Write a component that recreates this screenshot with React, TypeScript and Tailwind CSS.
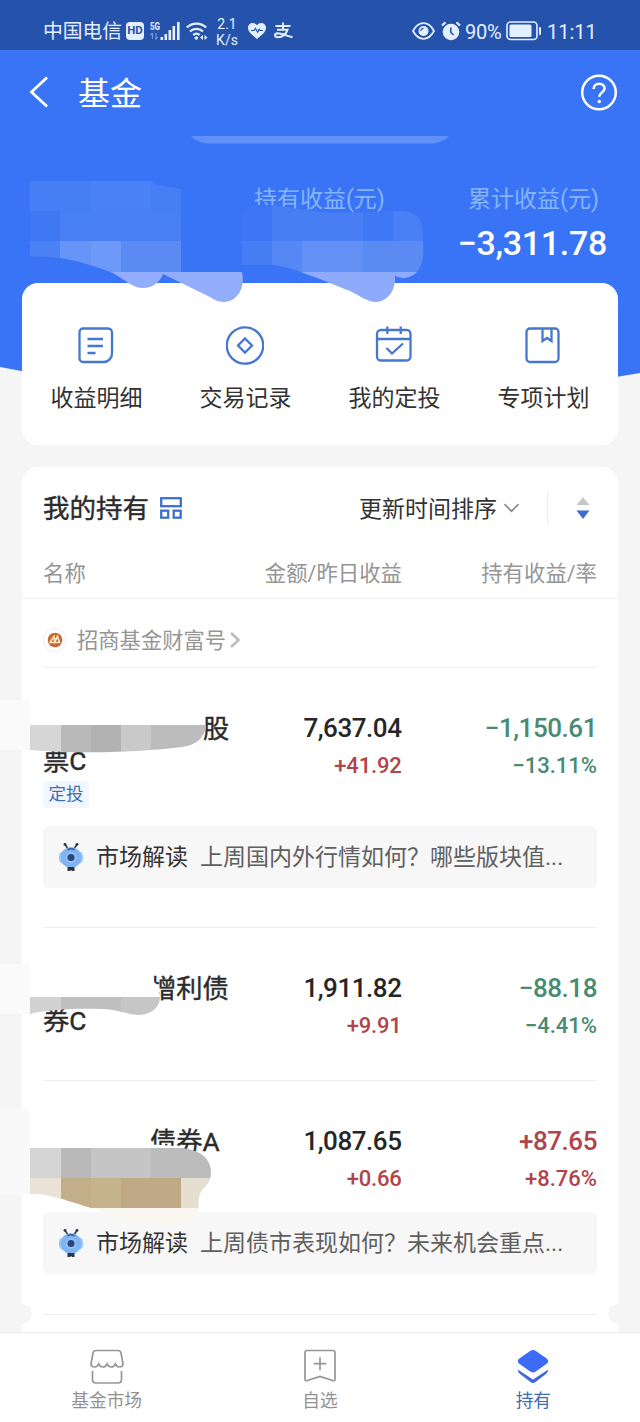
import React from "react";

interface Holding {
  id: number;
  name: string;
  rest?: string;
  indent: string;
  amount: string;
  daily: string;
  profit: string;
  rate: string;
  up: boolean;
  tag?: string;
  news?: string;
  newsMargin?: string;
  bottom: string;
}

const holdings: Holding[] = [
  {
    id: 1,
    name: "股",
    rest: "票C",
    indent: "pl-[160px]",
    amount: "7,637.04",
    daily: "+41.92",
    profit: "−1,150.61",
    rate: "−13.11%",
    up: false,
    tag: "定投",
    news: "上周国内外行情如何？哪些版块值...",
    newsMargin: "mt-[18px]",
    bottom: "pb-[39px]",
  },
  {
    id: 2,
    name: "增利债",
    rest: "券C",
    indent: "pl-[107px]",
    amount: "1,911.82",
    daily: "+9.91",
    profit: "−88.18",
    rate: "−4.41%",
    up: false,
    bottom: "pb-[33px]",
  },
  {
    id: 3,
    name: "债券A",
    indent: "pl-[107px]",
    amount: "1,087.65",
    daily: "+0.66",
    profit: "+87.65",
    rate: "+8.76%",
    up: true,
    news: "上周债市表现如何？未来机会重点...",
    newsMargin: "mt-[12px]",
    bottom: "pb-[40px]",
  },
];

const StatusBar: React.FC = () => (
  <div className="h-[50px] bg-[#2552ab] text-[#e4efff] flex items-center pt-3 pl-[43px] pr-[43px]">
    <span className="pt-0.5 w-[79px] text-[19.8px] leading-none whitespace-nowrap">中国电信</span>
    <span className="ml-1 w-[18px] h-[18px] rounded-[4px] bg-[#e4efff] text-[#2552ab] text-[11.5px] font-bold flex items-center justify-center">HD</span>
    <svg className="ml-[6px]" width="30" height="22" viewBox="0 0 30 22" fill="currentColor">
      <text x="0" y="9.5" fontSize="10" fontWeight="700" textLength="10" lengthAdjust="spacingAndGlyphs">5G</text>
      <path d="M2.500 13v6M.5 15 2.500 13M6 13v6l1.800-1.800" stroke="currentColor" strokeWidth="1.200" fill="none" opacity=".45" />
      <rect x="10.500" y="17" width="2.600" height="3" />
      <rect x="14.500" y="14" width="2.600" height="6" />
      <rect x="18.500" y="10" width="2.600" height="10" />
      <rect x="22.500" y="6" width="2.600" height="14" />
      <rect x="27" y="2" width="2.600" height="18" />
    </svg>
    <svg className="ml-[6px]" width="22" height="22" viewBox="0 0 22 22" fill="none" stroke="currentColor" strokeWidth="2.300">
      <path d="M.8 7.500a14 14 0 0 1 19.400 0M4 11.500a9.500 9.500 0 0 1 13 0M7.300 15a5 5 0 0 1 6.400 0" />
      <circle cx="10.300" cy="18" r="1.800" fill="currentColor" stroke="none" />
      <path d="M17 15v5l-3-2.500zM18.500 15v5l3-2.500z" fill="currentColor" stroke="none" />
    </svg>
    <span className="pt-0.5 ml-2 w-[22px] text-[14px] leading-[16px] text-center">2.1<br />K/s</span>
    <svg className="ml-[10px]" width="18" height="18" viewBox="0 0 18 18">
      <path d="M9 17C4 13 0 10 0 5.800 0 1 6-.6 9 3.200 12-.6 18 1 18 5.800 18 10 14 13 9 17z" fill="currentColor" />
      <path d="M3 8.500h3l1.500-2.200 2.200 4 1.500-3 .8 1.200h3" fill="none" stroke="#2552ab" strokeWidth="1.200" />
    </svg>
    <svg className="ml-[7px]" width="21" height="18" viewBox="0 0 21 18" fill="none" stroke="currentColor" strokeWidth="2">
      <path d="M2.500 4H17.500M10 .5V7.500M4 7.800H14.500C13 12 9.500 15 5 15.200 1 15.200 1.200 11.300 4.800 11.200 9 11.200 13.500 14 19.500 15.300" />
    </svg>
    <svg className="ml-auto" width="23" height="20" viewBox="0 0 23 20" fill="none" stroke="currentColor" strokeWidth="1.800">
      <path d="M1 10C4 4.500 7.500 2.200 11.500 2.200S19 4.500 22 10c-3 5.500-6.500 7.800-10.500 7.800S4 15.500 1 10z" />
      <circle cx="11.500" cy="10" r="5" fill="currentColor" stroke="none" />
      <path d="M8.800 10a2.700 2.700 0 0 1 2.700-2.700" stroke="#2552ab" strokeWidth="1.200" />
    </svg>
    <svg className="ml-[6px]" width="20" height="20" viewBox="0 0 20 20" fill="none" stroke="currentColor" strokeWidth="2.200">
      <circle cx="10" cy="11" r="8.300" fill="currentColor" stroke="none" />
      <path d="M1 4.500 4.500 1.400M19 4.500l-3.500-3.100" />
      <path d="M9.800 6.500v5l2.700 2.500" stroke="#2552ab" strokeWidth="1.600" />
    </svg>
    <span className="pt-px ml-[4px] w-[38px] text-[20px] leading-none tracking-[-0.3px]">90%</span>
    <svg className="ml-[3px]" width="36" height="20" viewBox="0 0 36 20">
      <rect x="1" y="1" width="30" height="17.500" rx="3.500" fill="none" stroke="currentColor" strokeWidth="1.600" />
      <rect x="3.500" y="3.600" width="22" height="12.300" rx="1.500" fill="currentColor" />
      <rect x="33" y="6" width="2" height="8" rx="1" fill="currentColor" />
    </svg>
    <span className="pt-px ml-[5px] w-[50px] text-[20px] leading-none whitespace-nowrap">11:11</span>
  </div>
);

// blurred-out blocks lying over the private values
const Mosaic: React.FC = () => (
  <svg className="absolute left-0 top-0 pointer-events-none" width="640" height="1422" viewBox="0 0 640 1422">
    <defs>
      <clipPath id="total">
        <path d="M30 181H151L158 185 181 189V272H242C245 285 240 301 224 302 218 302 213 299 210 297L163 274C160 282 153 288 143 288 133 288 125 280 113 273 95 266 75 260 60 258 50 256 40 257 30 256Z" />
      </clipPath>
      <clipPath id="profit">
        <path d="M242 211 258 205H272L300 209 330 213 400 211C418 211 424 220 423 242 425 262 420 276 405 278 400 278 396 277 395 275 396 288 390 301 376 302 368 302 360 296 350 291 330 283 290 266 272 265H242Z" />
      </clipPath>
      <clipPath id="row1">
        <path d="M30 725H206C204 740 195 745 182 747 150 751 90 755 30 750Z" />
      </clipPath>
      <clipPath id="row2">
        <path d="M30 997H160C160 1008 150 1015 138 1015 125 1014 118 1009 100 1009 75 1008 45 1010 30 1014Z" />
      </clipPath>
      <clipPath id="row3">
        <path d="M30 1148H182C200 1150 211 1158 211 1172 211 1182 206 1186 202 1190 198 1197 198 1202 199 1208H91C75 1203 60 1198 50 1196 43 1194 36 1194 30 1194Z" />
      </clipPath>
    </defs>
    <g clipPath="url(#total)">
      <rect x="30" y="181" width="152" height="30" fill="#467ef5" />
      <rect x="91" y="181" width="60" height="30" fill="#4b81f6" />
      <rect x="30" y="211" width="30" height="30" fill="#3f78f3" />
      <rect x="60" y="211" width="122" height="30" fill="#497ff4" />
      <rect x="30" y="241" width="30" height="31" fill="#4d82f4" />
      <rect x="60" y="241" width="31" height="31" fill="#6694f7" />
      <rect x="91" y="241" width="30" height="31" fill="#6d99f8" />
      <rect x="121" y="241" width="61" height="31" fill="#598bf3" />
      <rect x="30" y="272" width="215" height="32" fill="#91adfb" />
    </g>
    <g clipPath="url(#profit)">
      <rect x="242" y="205" width="30" height="36" fill="#3d76f5" />
      <rect x="272" y="205" width="91" height="36" fill="#477ef4" />
      <rect x="363" y="205" width="30" height="36" fill="#3f78f5" />
      <rect x="393" y="205" width="32" height="36" fill="#4a80f5" />
      <rect x="242" y="241" width="30" height="31" fill="#457df4" />
      <rect x="272" y="241" width="30" height="31" fill="#5588f4" />
      <rect x="302" y="241" width="61" height="31" fill="#6390f5" />
      <rect x="363" y="241" width="62" height="31" fill="#5a8bf3" />
      <rect x="242" y="272" width="183" height="32" fill="#8dabfa" />
    </g>

    <rect x="0" y="700" width="30" height="50" fill="#fafafa" />
    <g clipPath="url(#row1)">
      <rect x="30" y="725" width="31" height="30" fill="#d6d6d6" />
      <rect x="61" y="725" width="30" height="30" fill="#b9b9b9" />
      <rect x="91" y="725" width="30" height="30" fill="#b2b2b2" />
      <rect x="121" y="725" width="30" height="30" fill="#c9c9c9" />
      <rect x="151" y="725" width="56" height="30" fill="#bcbcbc" />
    </g>

    <rect x="0" y="964" width="30" height="50" fill="#fafafa" />
    <path d="M140 970H152L154 982 159 986V1000H140Z" fill="#fff" />
    <g clipPath="url(#row2)">
      <rect x="30" y="997" width="31" height="20" fill="#d2d2d2" />
      <rect x="61" y="997" width="60" height="20" fill="#bfbfbf" />
      <rect x="121" y="997" width="40" height="20" fill="#c6c6c6" />
    </g>

    <rect x="0" y="1108" width="30" height="86" fill="#f9f9f9" />
    <path d="M145 1144 175 1146 182 1149H145Z" fill="#fff" />
    <path d="M91 1208H199C197 1216 190 1222 182 1226 150 1226 120 1219 91 1208Z" fill="#faf7f0" />
    <g clipPath="url(#row3)">
      <rect x="30" y="1148" width="31" height="31" fill="#d5d5d5" />
      <rect x="61" y="1148" width="30" height="31" fill="#b9b9b9" />
      <rect x="91" y="1148" width="60" height="31" fill="#c5c5c6" />
      <rect x="151" y="1148" width="60" height="31" fill="#bcbcbd" />
      <rect x="30" y="1178" width="31" height="31" fill="#e9e2d5" />
      <rect x="61" y="1178" width="30" height="31" fill="#c2ae89" />
      <rect x="91" y="1178" width="30" height="31" fill="#c5b38d" />
      <rect x="121" y="1178" width="60" height="31" fill="#bfa986" />
      <rect x="181" y="1178" width="30" height="31" fill="#e5dfd2" />
    </g>

    <circle cx="22" cy="1314" r="10" fill="#f5f5f5" />
    <circle cx="618" cy="1314" r="10" fill="#f5f5f5" />
  </svg>
);

const menu = [
  {
    label: "收益明细",
    icon: <path d="M6 2.500H31A4 4 0 0 1 35 6.500V27A8.500 8.500 0 0 1 26.500 36H6A3.500 3.500 0 0 1 2.500 32.500V6A3.500 3.500 0 0 1 6 2.500ZM10.500 13H26M10.500 20H26M10.500 27H18.500" />,
  },
  {
    label: "交易记录",
    icon: (
      <>
        <circle cx="19" cy="19.500" r="18.200" />
        <path d="M19 12.500 26 19.500 19 26.500 12 19.500Z" />
      </>
    ),
  },
  {
    label: "我的定投",
    icon: <path d="M6 4H31A4 4 0 0 1 35.500 8V30A4 4 0 0 1 31.500 34.500H6A4 4 0 0 1 2 30.500V8A4 4 0 0 1 6 4ZM2 13H35.500M12.300.5V8M25.700.5V8M11.500 22 17 27.500 28 17.500" />,
  },
  {
    label: "专项计划",
    icon: <path d="M6 2.500H31A3.500 3.500 0 0 1 34.500 6V32.500A3.500 3.500 0 0 1 31 36H6A3.500 3.500 0 0 1 2.500 32.500V6A3.500 3.500 0 0 1 6 2.500ZM18.500 2.500V15L23 12 27.500 15V2.500" />,
  },
];

const BugIcon: React.FC = () => (
  <svg width="26" height="30" viewBox="0 0 26 30">
    <path d="M9.500 6 7 2.500M16.500 6l2.500-3.500" stroke="#2c3444" strokeWidth="1.600" />
    <circle cx="7" cy="2.300" r="1.400" fill="#2c3444" />
    <circle cx="19" cy="2.300" r="1.400" fill="#2c3444" />
    <ellipse cx="4.500" cy="15.500" rx="3.700" ry="6" fill="#9cc8f8" />
    <ellipse cx="21.500" cy="15.500" rx="3.700" ry="6" fill="#9cc8f8" />
    <ellipse cx="13" cy="15.500" rx="10.300" ry="10.500" fill="#7fb3f3" />
    <path d="M9.500 7.700q3.500-2 7 0" stroke="#35599a" strokeWidth="1.600" fill="none" />
    <circle cx="13" cy="15.500" r="5.400" fill="#93c1f7" />
    <circle cx="13" cy="15.500" r="3.500" fill="#294778" />
    <path d="M9.500 25h7v4h-3v-1h-1v1h-3z" fill="#2c3444" />
  </svg>
);

const HoldingRow: React.FC<{ item: Holding }> = ({ item }) => (
  <div className={`mx-[21px] pt-[44px] border-b border-[#ededed] ${item.bottom}`}>
    <div className="flex">
      <div className="w-[190px] pt-px text-[26.3px] leading-[32px] text-[#2b2b2b] [-webkit-text-stroke:0.4px]">
        <div className={`whitespace-nowrap ${item.indent}`}>{item.name}</div>
        {item.rest && <div>{item.rest}</div>}
        {item.tag && (
          <div className="mt-1 w-[46px] h-[27px] rounded-[3px] bg-[#f1f7fe] text-[17.5px] leading-[26px] text-center text-[#3f6fae] [-webkit-text-stroke:0]">
            {item.tag}
          </div>
        )}
      </div>
      <div className="w-[168.5px] text-right font-medium">
        <div className="text-[26px] leading-[32px] tracking-[-0.45px] text-[#262626]">{item.amount}</div>
        <div className="text-[22px] leading-[43px] tracking-[-0.2px] text-[#b1444a]">{item.daily}</div>
      </div>
      <div className={`flex-1 text-right font-medium ${item.up ? "text-[#b1444a]" : "text-[#478b70]"}`}>
        <div className="text-[26px] leading-[32px] tracking-[-0.45px]">{item.profit}</div>
        <div className="text-[22px] leading-[43px]">{item.rate}</div>
      </div>
    </div>
    {item.news && (
      <div className={`h-[62px] rounded-md bg-[#f7f7f7] flex items-center pl-[15px] text-[23px] whitespace-nowrap ${item.newsMargin}`}>
        <BugIcon />
        <span className="ml-3 pt-0.5 text-[#333]">市场解读</span>
        <span className="ml-[12px] pt-0.5 text-[#5f5f5f]">{item.news}</span>
      </div>
    )}
  </div>
);

const App: React.FC = () => {
  return (
    <div className="relative w-[640px] h-[1422px] overflow-hidden bg-[#f5f5f5] font-[Roboto,'Noto_Sans_CJK_SC',sans-serif] flex flex-col">
      <svg className="absolute left-0 top-0" width="640" height="400" viewBox="0 0 640 400">
        <path d="M0 0H640V373Q320 430 0 367Z" fill="#3974f6" />
        <path d="M191 136H449C444 141 438 143.500 430 143.500H210C202 143.500 196 141 191 136Z" fill="#5f92f8" />
      </svg>

      <div className="relative">
        <StatusBar />
        <div className="h-[86px] flex items-center pl-[29px] pr-[22px] text-white">
          <svg className="-mt-0.5" width="20" height="32" viewBox="0 0 20 32" fill="none" stroke="currentColor" strokeWidth="2.800">
            <path d="M18 1.500 2.500 16 18 30.500" />
          </svg>
          <h1 className="ml-[29px] pt-0.5 text-[32px] leading-none">基金</h1>
          <svg className="ml-auto" width="38" height="38" viewBox="0 0 38 38" fill="none" stroke="currentColor" strokeWidth="2.500">
            <circle cx="19" cy="18.500" r="16.800" />
            <path d="M13.600 15c0-3.300 2.400-5.300 5.500-5.300s5.500 2 5.500 4.800c0 3.800-5.400 4-5.400 8.300" />
            <circle cx="19.300" cy="27.500" r="1.700" fill="currentColor" stroke="none" />
          </svg>
        </div>
        <div className="h-[147px] pt-[47px] pl-[254px] pr-[33px] flex justify-between">
          <div className="text-[23px] leading-[34px] text-[#86b4f6]">持有收益(元)</div>
          <div className="text-right text-white">
            <div className="pr-[8px] text-[23px] leading-[34px] text-[#86b4f6]">累计收益(元)</div>
            <div className="text-[34px] leading-[53px] tracking-[-0.3px] font-medium">−3,311.78</div>
          </div>
        </div>
      </div>

      <div className="relative mx-[22px] h-[162px] rounded-2xl bg-white grid grid-cols-4">
        {menu.map((item) => (
          <div key={item.label} className="flex flex-col items-center pt-[43px]">
            <svg className="mr-[2px]" width="38" height="39" viewBox="0 0 38 39" fill="none" stroke="#4677ce" strokeWidth="2.300">
              {item.icon}
            </svg>
            <span className="mt-[17px] text-[23px] leading-[34px] text-[#333]">{item.label}</span>
          </div>
        ))}
      </div>

      <div className="relative mx-[22px] mt-[22px] h-[865px] overflow-hidden rounded-t-2xl bg-white">
        <div className="h-[82px] px-[21px] flex items-center">
          <h2 className="pt-0.5 text-[26.5px] leading-none text-[#2b2b2b] [-webkit-text-stroke:0.4px]">我的持有</h2>
          <svg className="ml-[11px]" width="22" height="22" viewBox="0 0 22 22" fill="none" stroke="#4170cc" strokeWidth="2.300">
            <rect x="1.200" y="1.200" width="19.600" height="8" />
            <rect x="1.200" y="13.700" width="7" height="7" />
            <rect x="13.700" y="13.700" width="7" height="7" />
          </svg>
          <span className="ml-auto pt-0.5 text-[23px] leading-none text-[#333]">更新时间排序</span>
          <svg className="ml-[6px]" width="17" height="10" viewBox="0 0 17 10" fill="none" stroke="#8c8c8c" strokeWidth="1.700">
            <path d="M1.500 1.200 8.500 8.200 15.500 1.200" />
          </svg>
          <div className="ml-[27px] w-px h-8 bg-[#ececec]" />
          <svg className="ml-[28px] mr-[7px]" width="14" height="22" viewBox="0 0 14 22">
            <path d="M7 0 13.500 8H.5Z" fill="#c4c9c6" />
            <path d="M7 22 .5 13.500H13.500Z" fill="#3a6cd2" />
          </svg>
        </div>
        <div className="h-[50px] px-[21px] pt-px flex items-center text-[21.4px] text-[#959595] border-b border-[#ededed]">
          <span className="w-[190px]">名称</span>
          <span className="w-[169px] text-right whitespace-nowrap">金额/昨日收益</span>
          <span className="flex-1 text-right">持有收益/率</span>
        </div>
        <div className="mx-[21px] h-[69px] flex items-center pt-[13px] border-b border-[#efefef] text-[21.3px] text-[#959595]">
          <svg width="24" height="24" viewBox="0 0 24 24">
            <circle cx="12" cy="12" r="11.500" fill="#fff" stroke="#e9eff3" />
            <circle cx="12" cy="12" r="7.300" fill="#cd6534" />
            <path d="M7 14.500 11 8.500 11.800 13.500 14.500 8.500 16.500 14.500Z" fill="none" stroke="#fbe7bd" strokeWidth="1.700" />
          </svg>
          <span className="ml-[10px] pt-0.5 leading-none">招商基金财富号</span>
          <svg className="ml-[3px]" width="12" height="18" viewBox="0 0 12 18" fill="none" stroke="#bdbdbd" strokeWidth="2.600">
            <path d="M2 2 9.500 9 2 16" />
          </svg>
        </div>
        {holdings.map((item) => (
          <HoldingRow key={item.id} item={item} />
        ))}
      </div>

      <Mosaic />

      <nav className="relative h-[90px] shrink-0 bg-white border-t border-[#ebebeb] grid grid-cols-3 text-[17.7px] leading-[26px] text-[#929292]">
        <div className="flex flex-col items-center pt-[16px]">
          <svg width="36" height="36" viewBox="0 0 36 36" fill="none" stroke="#969696" strokeWidth="1.700">
            <path d="M7 1.500H29Q31.500 1.500 32 4L34 14.500Q34 18 30.500 18 27.500 18 26.500 15 25 18 22.300 18 19.500 18 18.200 15 16.500 18 14 18 11 18 9.700 15 8.500 18 5.500 18 2 18 2 14.500L4 4Q4.500 1.500 7 1.500ZM3.500 22V30.500Q3.500 34 7 34H29Q32.500 34 32.500 30.500V22" />
          </svg>
          <span className="mt-[3px]">基金市场</span>
        </div>
        <div className="flex flex-col items-center pt-[16px]">
          <svg width="36" height="36" viewBox="0 0 36 36" fill="none" stroke="#969696" strokeWidth="1.700">
            <path d="M5 1.500H31Q33 1.500 33 3.500V30Q33 32.500 30.500 31.500L18 27.500 5.500 31.500Q3 32.500 3 30V3.500Q3 1.500 5 1.500ZM18 8.500V21M11.800 14.700H24.200" />
          </svg>
          <span className="mt-[3px]">自选</span>
        </div>
        <div className="flex flex-col items-center pt-[16px] text-[#3f6bb3]">
          <svg width="36" height="36" viewBox="0 0 36 36">
            <path d="M15.500 1.700Q18 .2 20.500 1.700L32 9.800Q34.500 12.300 32 14.500L20.500 22.700Q18 24.300 15.500 22.700L4 14.500Q1.500 12.300 4 9.800Z" fill="#3b6bf7" />
            <path d="M2.700 20.500Q3 23.500 5 25L15.500 33Q18 35 20.500 33L31 25Q33 23.500 33.300 20.500L18 30.500Z" fill="#4068dc" />
          </svg>
          <span className="mt-[3px]">持有</span>
        </div>
      </nav>
    </div>
  );
};

export default App;
